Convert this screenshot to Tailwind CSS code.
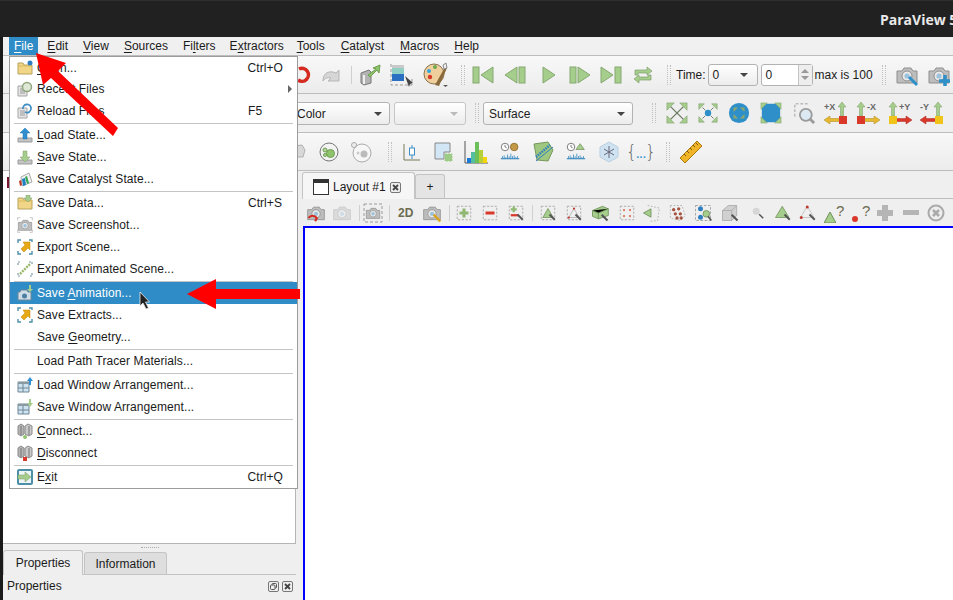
<!DOCTYPE html>
<html><head><meta charset="utf-8"><script src="https://cdn.jsdelivr.net/npm/@tailwindcss/browser@4"></script></head>
<body class="bg-[#efefef]">
<svg class="hidden" width="0" height="0">
<defs>
<symbol id="folder" viewBox="0 0 16 16"><path d="M1 3h5l1 2h8v9H1z" fill="#f2d687" stroke="#b9a25e"/><path d="M1 6h14" stroke="#d9b95c"/></symbol>
<symbol id="doc" viewBox="0 0 16 16"><path d="M1 5h9v10H1z" fill="#e4e4e4" stroke="#a5a5a5"/><path d="M3 8h5M3 10h5M3 12h5" stroke="#9a9a9a"/></symbol>
<symbol id="tray" viewBox="0 0 16 16"><path d="M1 11h14v4H1z" fill="#c4c4c4" stroke="#9b9b9b"/></symbol>
<symbol id="exportic" viewBox="0 0 16 16"><path d="M13 3v8l-2-2-4 4-3-3 4-4-2-3z" fill="#e8a917" stroke="#b8860b" stroke-width=".5"/><path d="M1 4V1h3M12 1h3v2M1 12v3h3M15 12v3h-3" fill="none" stroke="#4e8fa8" stroke-width="1.400"/></symbol>
<symbol id="window" viewBox="0 0 16 16"><path d="M1 5h11v10H1z" fill="#cfe2ef" stroke="#6d8696"/><path d="M1 5h11v2H1z" fill="#8a9aa3"/><path d="M6 7v8M1 11h11" stroke="#6d8696"/></symbol>
<symbol id="server" viewBox="0 0 16 16"><path d="M1 3l3-2 3 2v8l-3 2-3-2z" fill="#b5b5b5" stroke="#8a8a8a"/><path d="M8 3l3-2 4 2v8l-3 2-4-2z" fill="#c9c9c9" stroke="#8a8a8a"/><path d="M4 3v9M12 3v9" stroke="#777"/></symbol>
<symbol id="cam" viewBox="0 0 24 24"><path d="M2 8h5l2-3h7l2 3h4v12H2z" fill="#bdbdbd" stroke="#8f8f8f"/><circle cx="12" cy="13" r="5" fill="#e9e9e9" stroke="#8f8f8f"/><circle cx="12" cy="13" r="2.600" fill="#9dc3dc"/></symbol>
<symbol id="dash" viewBox="0 0 24 24"><rect x="3" y="3" width="18" height="18" fill="none" stroke="#9a9a9a" stroke-dasharray="3 2"/></symbol>
<symbol id="xarr" viewBox="0 0 24 24"><g stroke="#6d7a60" stroke-width="1.400"><path d="M5 5l14 14M19 5L5 19"/></g><g fill="#a5cd8b" stroke="#7c9a68" stroke-width=".6"><path d="M1 1h8L1 9zM23 1h-8l8 8zM1 23h8l-8-8zM23 23h-8l8-8z"/></g></symbol>
<symbol id="clockwave" viewBox="0 0 24 24"><circle cx="6" cy="6" r="4.500" fill="#fff" stroke="#666"/><path d="M6 3.500V6l2 1" stroke="#666" fill="none"/><path d="M1 20h22" stroke="#4a90c2" stroke-width="1.500"/><path d="M3 20v-3M5 20v-4M7 20v-2M9 20v-5M11 20v-3M13 20v-6M15 20v-3M17 20v-4M19 20v-2M21 20v-3" stroke="#3f8fc4"/></symbol>
<symbol id="pick" viewBox="0 0 24 24"><path d="M14 14l7 7" stroke="#555" stroke-width="2.500"/></symbol>
</defs>
</svg>
<div class="relative w-[953px] h-[600px] overflow-hidden font-['Liberation_Sans',Arial,sans-serif] text-[12px] text-[#1b1b1b] leading-[14px]">

<!-- title bar -->
<div class="h-[37px] bg-[#212121] border-t border-[#2e2e2e] pl-[880px] pt-[10px] font-['Open_Sans',sans-serif] font-bold text-[14px] leading-[18px] text-[#e9e9e9] whitespace-nowrap">ParaView 5.10.1</div>

<div class="flex h-[563px]">
<div class="w-[3px] bg-[#1a1a1a] shrink-0"></div>
<div class="flex-1 flex flex-col min-w-0">

<!-- menu bar -->
<div class="h-[18px] bg-[#f0f0f0] flex pl-[6px] gap-[5px] items-stretch shrink-0">
<span class="px-[5px] -mr-[1px] bg-[#308cc6] text-white flex items-center"><span><u class="underline-offset-2">F</u>ile</span></span>
<span class="px-[5px] flex items-center"><span><u class="underline-offset-2">E</u>dit</span></span>
<span class="px-[5px] flex items-center"><span><u class="underline-offset-2">V</u>iew</span></span>
<span class="px-[5px] flex items-center"><span><u class="underline-offset-2">S</u>ources</span></span>
<span class="px-[5px] -mr-[1px] flex items-center"><span>Fi<u class="underline-offset-2">l</u>ters</span></span>
<span class="px-[5px] -mr-[2px] flex items-center"><span>E<u class="underline-offset-2">x</u>tractors</span></span>
<span class="px-[5px] mr-[1px] flex items-center"><span><u class="underline-offset-2">T</u>ools</span></span>
<span class="px-[5px] mr-[1px] flex items-center"><span><u class="underline-offset-2">C</u>atalyst</span></span>
<span class="px-[5px] flex items-center"><span><u class="underline-offset-2">M</u>acros</span></span>
<span class="px-[5px] flex items-center"><span><u class="underline-offset-2">H</u>elp</span></span>
</div>

<!-- toolbar 1 -->
<div class="h-[39px] border-t border-b border-[#bdbdbd] bg-gradient-to-b from-[#f8f8f8] to-[#ececec] flex items-center pl-[288px] shrink-0 whitespace-nowrap">
<svg class="w-[24px] h-[24px] shrink-0" viewBox="0 0 24 24"><path d="M8 6A6.500 6.500 0 1 1 7 17" fill="none" stroke="#d42a1f" stroke-width="3.500"/></svg>
<svg class="w-[24px] h-[24px] ml-[4px] shrink-0" viewBox="0 0 24 24"><path d="M4 18c0-8 6-11 13-8l3-3v11h-11l3-3c-3-1-6 0-8 3z" fill="#d6d6d6" stroke="#b5b5b5"/></svg>
<span class="w-px h-[18px] bg-[#cfcfcf] ml-[8px]"></span>
<svg class="w-[22px] h-[22px] ml-[7px] shrink-0" viewBox="0 0 22 22"><path d="M2 9l8-3 2 2v11l-7 2-3-2z" fill="#b3b3b3" stroke="#777"/><path d="M5 11v9" stroke="#eee" stroke-width="2"/><path d="M9 11l8-6-3-1 7-3-1 8-2-3-7 7z" fill="#8fc46d" stroke="#6f9e50"/></svg>
<svg class="w-[24px] h-[24px] ml-[9px] shrink-0" viewBox="0 0 24 24"><rect x="2" y="2" width="12" height="4" fill="#c9c9c9"/><rect x="2" y="5" width="12" height="6" fill="#8fcfc4"/><rect x="2" y="11" width="12" height="7" fill="#2b6fc2"/><path d="M1 1v21h21v-7" fill="none" stroke="#999" stroke-dasharray="3 2"/><path d="M15 13l8 7-3 1-1 3z" fill="#444"/></svg>
<svg class="w-[26px] h-[26px] ml-[9px] shrink-0" viewBox="0 0 26 26"><ellipse cx="11" cy="12" rx="10" ry="10" fill="#efcf9c" stroke="#8a7350"/><circle cx="6" cy="9" r="2" fill="#35a5dd"/><circle cx="12" cy="5" r="2" fill="#6fa84f"/><circle cx="7" cy="15" r="2.200" fill="#d9382a"/><path d="M12 23l10-18 2 1-8 18z" fill="#8a6a3a"/><path d="M20 3l3-2 1 5-3 1z" fill="#eee" stroke="#888"/><path d="M20 23h5l-2.500 2z" fill="#555"/></svg>
<span class="w-[4px] h-[20px] border-x border-dotted border-[#c0c0c0] ml-[12px]"></span>
<svg class="w-[22px] h-[18px] ml-[7px] shrink-0" viewBox="0 0 22 18"><rect x="1" y="1" width="6" height="16" fill="#a5cd8b" stroke="#86a870"/><path d="M21 1v16L9 9z" fill="#a5cd8b" stroke="#86a870"/></svg>
<svg class="w-[22px] h-[18px] ml-[10px] shrink-0" viewBox="0 0 22 18"><rect x="15" y="1" width="6" height="16" fill="#a5cd8b" stroke="#86a870"/><path d="M13 1v16L1 9z" fill="#a5cd8b" stroke="#86a870"/></svg>
<svg class="w-[14px] h-[18px] ml-[16px] shrink-0" viewBox="0 0 14 18"><path d="M1 1v16l12-8z" fill="#a5cd8b" stroke="#86a870"/></svg>
<svg class="w-[22px] h-[18px] ml-[13px] shrink-0" viewBox="0 0 22 18"><rect x="1" y="1" width="6" height="16" fill="#a5cd8b" stroke="#86a870"/><path d="M9 1v16l12-8z" fill="#a5cd8b" stroke="#86a870"/></svg>
<svg class="w-[22px] h-[18px] ml-[9px] shrink-0" viewBox="0 0 22 18"><rect x="15" y="1" width="6" height="16" fill="#a5cd8b" stroke="#86a870"/><path d="M1 1v16l12-8z" fill="#a5cd8b" stroke="#86a870"/></svg>
<svg class="w-[20px] h-[20px] ml-[11px] shrink-0" viewBox="0 0 20 20"><path d="M2 10V5h12V2l5 4-5 4V8H5v2zM18 10v5H6v3l-5-4 5-4v2h9v-2z" fill="#a5cd8b" stroke="#7f9f6a" stroke-width=".7"/></svg>
<span class="w-[4px] h-[20px] border-x border-dotted border-[#c0c0c0] ml-[14px]"></span>
<span class="ml-[5px]">Time:</span>
<span class="ml-[2px] w-[50px] h-[22px] border border-[#b3b3b3] rounded-[3px] bg-gradient-to-b from-white to-[#ececec] flex items-center justify-between pl-[4px] pr-[9px] shrink-0"><span>0</span><span class="w-0 h-0 border-x-[4px] border-x-transparent border-t-[4px] border-t-[#444]"></span></span>
<span class="ml-[3px] w-[52px] h-[22px] border border-[#b3b3b3] rounded-[3px] bg-white flex items-stretch shrink-0"><span class="flex-1 pl-[4px] flex items-center">0</span><span class="w-[14px] border-l border-[#c4c4c4] bg-[#eee] flex flex-col items-center justify-center gap-[3px]"><span class="w-0 h-0 border-x-[4px] border-x-transparent border-b-[4px] border-b-[#999]"></span><span class="w-0 h-0 border-x-[4px] border-x-transparent border-t-[4px] border-t-[#999]"></span></span></span>
<span class="ml-[2px]">max is 100</span>
<span class="w-[4px] h-[20px] border-x border-dotted border-[#c0c0c0] ml-[9px]"></span>
<span class="relative w-[24px] h-[24px] ml-[9px] shrink-0"><svg class="w-[24px] h-[24px]" viewBox="0 0 24 24"><use href="#cam"/><path d="M14 14l8 8" stroke="#2f8fc9" stroke-width="3"/></svg></span>
<span class="relative w-[24px] h-[24px] ml-[8px] shrink-0"><svg class="w-[24px] h-[24px]" viewBox="0 0 24 24"><use href="#cam"/><path d="M18 12v11M12 18h11" stroke="#2f8fc9" stroke-width="3.500"/></svg></span>
</div>

<!-- toolbar 2 -->
<div class="h-[39px] border-b border-[#bdbdbd] bg-[#efefef] flex items-center pl-[200px] shrink-0 whitespace-nowrap">
<span class="mt-[1px] w-[187px] h-[23px] border border-[#b3b3b3] rounded-[3px] bg-gradient-to-b from-white to-[#ececec] flex items-center justify-between pl-[93px] pr-[7px] shrink-0"><span>Color</span><span class="w-0 h-0 border-x-[4px] border-x-transparent border-t-[4px] border-t-[#444]"></span></span>
<span class="mt-[1px] ml-[4px] w-[72px] h-[23px] border border-[#c6c6c6] rounded-[3px] bg-gradient-to-b from-white to-[#ececec] flex items-center justify-end pr-[7px] shrink-0"><span class="w-0 h-0 border-x-[4px] border-x-transparent border-t-[4px] border-t-[#bbb]"></span></span>
<span class="w-[4px] h-[20px] border-x border-dotted border-[#c0c0c0] ml-[9px]"></span>
<span class="mt-[1px] ml-[4px] w-[150px] h-[23px] border border-[#b3b3b3] rounded-[3px] bg-gradient-to-b from-white to-[#ececec] flex items-center justify-between pl-[5px] pr-[7px] shrink-0"><span>Surface</span><span class="w-0 h-0 border-x-[4px] border-x-transparent border-t-[4px] border-t-[#444]"></span></span>
<span class="w-[4px] h-[20px] border-x border-dotted border-[#c0c0c0] ml-[19px]"></span>
<svg class="w-[22px] h-[22px] ml-[10px] shrink-0" viewBox="0 0 24 24"><use href="#xarr"/></svg>
<svg class="w-[22px] h-[22px] ml-[9px] shrink-0" viewBox="0 0 24 24"><path d="M2 2h6L2 8zM22 2h-6l6 6zM2 22h6l-6-6zM22 22h-6l6-6z" fill="#a5cd8b" stroke="#7c9a68" stroke-width=".6"/><path d="M6 6l3 3M18 6l-3 3M6 18l3-3M18 18l-3-3" stroke="#6d7a60"/><circle cx="12" cy="12" r="3.500" fill="#2f8fc9"/></svg>
<svg class="w-[22px] h-[22px] ml-[9px] shrink-0" viewBox="0 0 24 24"><circle cx="12" cy="12" r="11" fill="#2f8fc9"/><path d="M6 6h5l-5 5zM18 6h-5l5 5zM6 18h5l-5-5zM18 18h-5l5-5z" fill="#8ba86f"/></svg>
<svg class="w-[22px] h-[22px] ml-[10px] shrink-0" viewBox="0 0 24 24"><path d="M5 2h14l3 3v14l-3 3H5l-3-3V5z" fill="#2f8fc9"/><path d="M1 1h7L1 8zM23 1h-7l7 7zM1 23h7l-7-7zM23 23h-7l7-7z" fill="#a5cd8b" stroke="#7c9a68" stroke-width=".5"/></svg>
<span class="relative w-[22px] h-[22px] ml-[11px] shrink-0"><svg class="w-[22px] h-[22px]" viewBox="0 0 24 24"><path d="M2 16V2h14" fill="none" stroke="#9a9a9a" stroke-dasharray="3 2"/><circle cx="14" cy="14" r="6.500" fill="#dce9f2" stroke="#9a9a9a" stroke-width="2"/><path d="M18 18l5 5" stroke="#9a9a9a" stroke-width="3"/></svg></span>
<svg class="w-[24px] h-[24px] ml-[9px] shrink-0 font-['Liberation_Sans',sans-serif]" viewBox="0 0 24 24"><text x="0" y="9" font-size="9" font-weight="700" fill="#666">+X</text><path d="M18 1l4 5h-2.500v9h-3V6H14z" fill="#a5cd8b" stroke="#7c9a68" stroke-width=".5"/><path d="M0 19l6-4v2.500h10v3H6V23z" fill="#e8b92f" stroke="#a88a20" stroke-width=".5"/><rect x="15" y="15" width="8" height="8" fill="#d9382a"/></svg>
<svg class="w-[24px] h-[24px] ml-[8px] shrink-0 font-['Liberation_Sans',sans-serif]" viewBox="0 0 24 24"><text x="11" y="9" font-size="9" font-weight="700" fill="#666">-X</text><path d="M5 1l4 5H6.500v9h-3V6H1z" fill="#a5cd8b" stroke="#7c9a68" stroke-width=".5"/><path d="M24 19l-6-4v2.500H8v3h10V23z" fill="#e8b92f" stroke="#a88a20" stroke-width=".5"/><rect x="1" y="15" width="8" height="8" fill="#d9382a"/></svg>
<svg class="w-[24px] h-[24px] ml-[8px] shrink-0 font-['Liberation_Sans',sans-serif]" viewBox="0 0 24 24"><text x="11" y="9" font-size="9" font-weight="700" fill="#666">+Y</text><path d="M5 1l4 5H6.500v9h-3V6H1z" fill="#a5cd8b" stroke="#7c9a68" stroke-width=".5"/><path d="M24 19l-6-4v2.500H8v3h10V23z" fill="#d9382a" stroke="#a82a20" stroke-width=".5"/><rect x="1" y="15" width="8" height="8" fill="#f0c419"/></svg>
<svg class="w-[24px] h-[24px] ml-[8px] shrink-0 font-['Liberation_Sans',sans-serif]" viewBox="0 0 24 24"><text x="0" y="9" font-size="9" font-weight="700" fill="#666">-Y</text><path d="M18 1l4 5h-2.500v9h-3V6H14z" fill="#a5cd8b" stroke="#7c9a68" stroke-width=".5"/><path d="M0 19l6-4v2.500h10v3H6V23z" fill="#d9382a" stroke="#a82a20" stroke-width=".5"/><rect x="15" y="15" width="8" height="8" fill="#f0c419"/></svg>
</div>

<!-- toolbar 3 -->
<div class="h-[38px] border-b border-[#bdbdbd] bg-gradient-to-b from-[#f8f8f8] to-[#ececec] flex items-center pl-[290px] shrink-0">
<svg class="w-[14px] h-[20px] shrink-0" viewBox="0 0 14 20"><path d="M1 4l8-1 3 5-2 7H1z" fill="#d8d8d8" stroke="#b0b0b0"/></svg>
<svg class="w-[20px] h-[20px] ml-[12px] shrink-0" viewBox="0 0 20 20"><circle cx="10" cy="10" r="9" fill="#f3f3f3" stroke="#777"/><circle cx="11.500" cy="11.500" r="4" fill="#8fc46d" stroke="#6f9e50"/><circle cx="6" cy="8" r="2" fill="#b6d7a2" stroke="#6f9e50"/><circle cx="6" cy="13" r="1.500" fill="#b6d7a2" stroke="#6f9e50"/></svg>
<svg class="w-[22px] h-[22px] ml-[11px] shrink-0" viewBox="0 0 22 22"><circle cx="12" cy="12" r="9" fill="#f6f6f6" stroke="#aaa"/><circle cx="14" cy="13" r="3.500" fill="#bbb"/><circle cx="8" cy="12" r="1.500" fill="#ccc"/><circle cx="4" cy="4" r="2.500" fill="#eee" stroke="#aaa"/></svg>
<span class="w-[4px] h-[20px] border-x border-dotted border-[#c0c0c0] ml-[16px]"></span>
<svg class="w-[18px] h-[18px] ml-[11px] shrink-0" viewBox="0 0 18 18"><path d="M1 1v16h16" fill="none" stroke="#7a7a5a"/><path d="M9 2v14" stroke="#3f8fc4"/><rect x="6.500" y="5" width="5" height="7" fill="#fff" stroke="#3f8fc4"/></svg>
<svg class="w-[20px] h-[20px] ml-[13px] shrink-0" viewBox="0 0 20 20"><path d="M1 1h15v9h-6v7H1z" fill="#d3e6f5" stroke="#888"/><rect x="11" y="12" width="7" height="7" fill="#9ccc85" stroke="#9ccc85" stroke-dasharray="2 1"/></svg>
<svg class="w-[24px] h-[24px] ml-[10px] shrink-0" viewBox="0 0 24 24"><path d="M1 1v22h23" fill="none" stroke="#555"/><rect x="3" y="18" width="4" height="5" fill="#1e78d8"/><rect x="7" y="12" width="4" height="11" fill="#55bda0"/><rect x="11" y="2" width="4" height="21" fill="#6cc05a"/><rect x="15" y="10" width="4" height="13" fill="#b7cf3a"/><rect x="19" y="17" width="4" height="6" fill="#f4d30f"/></svg>
<svg class="w-[20px] h-[20px] ml-[12px] shrink-0" viewBox="0 0 24 24"><use href="#clockwave"/><circle cx="17" cy="6" r="4.500" fill="#c49a4a" stroke="#8a6a2a"/></svg>
<svg class="w-[22px] h-[22px] ml-[12px] shrink-0" viewBox="0 0 22 22"><path d="M2 3l14-2 5 8-5 11-11-1z" fill="#9fc77f" stroke="#76985c"/><path d="M4 16L18 4" stroke="#2f7fc0" stroke-width="2.500" stroke-dasharray="1.500 1"/><path d="M4 20L21 6" stroke="#2f7fc0"/></svg>
<svg class="w-[20px] h-[20px] ml-[12px] shrink-0" viewBox="0 0 24 24"><use href="#clockwave"/><path d="M17 2l5 7h-10z" fill="#a5cd8b" stroke="#7c9a68"/></svg>
<svg class="w-[22px] h-[22px] ml-[12px] shrink-0" viewBox="0 0 22 22"><path d="M11 1l9 5v10l-9 5-9-5V6z" fill="#cfe2f2" stroke="#b9cfe0"/><path d="M11 5v12M6 8l10 6M16 8L6 14" stroke="#667"/></svg>
<span class="text-[#666] text-[17px] ml-[9px] w-[24px] flex items-center justify-center font-['DejaVu_Sans',sans-serif] font-light leading-[20px] shrink-0 whitespace-nowrap">{<span class="text-[#3f9bd0] font-bold text-[9px] -mx-[1px] pt-[6px]">...</span>}</span>
<span class="w-[4px] h-[20px] border-x border-dotted border-[#c0c0c0] ml-[13px]"></span>
<svg class="w-[24px] h-[24px] ml-[9px] shrink-0" viewBox="0 0 24 24"><path d="M1 18L18 1l5 5L6 23z" fill="#f0b429" stroke="#a87a10"/><path d="M5 14l2 2M8 11l2 2M11 8l2 2M14 5l2 2M17 3l2 2" stroke="#7a5a10"/></svg>
</div>

<!-- body -->
<div class="flex-1 flex min-h-0">
<!-- left dock -->
<div class="w-[299px] shrink-0 flex flex-col">
<div class="flex-1 w-[293px] bg-white border-r border-b border-[#b5b5b5] relative"><span class="absolute left-[4px] top-[6px] w-[2px] h-[11px] bg-[#7a1530]"></span></div>
<div class="h-[6px] flex items-center justify-center w-[293px]"><span class="w-[18px] border-t border-dotted border-[#aaa]"></span></div>
<div class="h-[25px] flex items-end border-b border-[#c4c4c4] w-[293px]">
<div class="relative -mb-px w-[80px] h-[25px] bg-[#efefef] border border-b-0 border-[#c4c4c4] rounded-t-[3px] flex items-center justify-center">Properties</div>
<div class="w-[83px] h-[22px] ml-px bg-[#dedede] border border-b-0 border-[#c4c4c4] rounded-t-[3px] flex items-center justify-center">Information</div>
</div>
<div class="h-[25px] w-[293px] flex items-center pl-[4px] pb-[3px] shrink-0">
<span class="flex-1">Properties</span>
<svg class="w-[11px] h-[11px] shrink-0" viewBox="0 0 11 11"><rect x=".5" y=".5" width="10" height="10" rx="1.500" fill="none" stroke="#777"/><rect x="4" y="2.500" width="4.500" height="4.500" rx="1" fill="none" stroke="#555"/><rect x="2.500" y="4" width="4.500" height="4.500" rx="1" fill="#efefef" stroke="#555"/></svg>
<svg class="w-[11px] h-[11px] ml-[3px] mr-[3px] shrink-0" viewBox="0 0 11 11"><rect x=".5" y=".5" width="10" height="10" rx="1.500" fill="none" stroke="#777"/><path d="M3 3l5 5M8 3L3 8" stroke="#444" stroke-width="1.800"/></svg>
</div>
</div>

<!-- right -->
<div class="flex-1 min-w-0 flex flex-col">
<div class="h-[28px] border-b border-[#bdbdbd] flex items-end shrink-0">
<div class="relative -mb-px w-[113px] h-[27px] bg-[#f6f6f6] border border-b-0 border-[#c4c4c4] rounded-t-[3px] flex items-center pl-[10px] pt-[2px] whitespace-nowrap shrink-0">
<svg class="w-[16px] h-[16px] shrink-0" viewBox="0 0 16 16"><rect x=".5" y=".5" width="15" height="15" fill="#fff" stroke="#333"/><rect x="0" y="0" width="16" height="4" fill="#333"/></svg>
<span class="ml-[4px]">Layout #1</span>
<svg class="w-[11px] h-[11px] ml-[4px] shrink-0" viewBox="0 0 11 11"><rect x=".5" y=".5" width="10" height="10" rx="1.500" fill="#eee" stroke="#777"/><path d="M3 3l5 5M8 3L3 8" stroke="#444" stroke-width="1.800"/></svg>
</div>
<div class="w-[30px] h-[24px] bg-[#e4e4e4] border border-b-0 border-[#c4c4c4] rounded-t-[3px] flex items-center justify-center">+</div>
</div>

<!-- view toolbar -->
<div class="h-[27px] bg-[#efefef] flex items-center pl-[4px] shrink-0 whitespace-nowrap">
<span class="w-[20px] h-[20px] shrink-0"><svg class="w-[20px] h-[20px]" viewBox="0 0 24 24"><use href="#cam"/><path d="M3 18a6 6 0 0 1 10 0l-2 4" fill="none" stroke="#d42a1f" stroke-width="2.500"/></svg></span>
<span class="w-[20px] h-[20px] ml-[6px] shrink-0 opacity-40"><svg class="w-[20px] h-[20px]" viewBox="0 0 24 24"><use href="#cam"/></svg></span>
<span class="w-px h-[16px] bg-[#d0d0d0] ml-[7px]"></span>
<svg class="w-[24px] h-[24px] ml-[1px] shrink-0" viewBox="0 0 24 24"><use href="#dash"/><g transform="translate(4 4) scale(.67)"><use href="#cam"/></g></svg>
<span class="w-px h-[16px] bg-[#d0d0d0] ml-[4px]"></span>
<span class="ml-[8px] font-bold text-[#6b6b4f] text-[12px]">2D</span>
<svg class="w-[20px] h-[20px] ml-[9px] shrink-0" viewBox="0 0 24 24"><use href="#cam"/><path d="M14 14l8 8" stroke="#d9a520" stroke-width="3"/></svg>
<span class="w-px h-[16px] bg-[#d0d0d0] ml-[7px]"></span>
<svg class="w-[18px] h-[18px] ml-[5px] shrink-0" viewBox="0 0 24 24"><use href="#dash"/><path d="M12 6v12M6 12h12" stroke="#8fb872" stroke-width="4"/></svg>
<svg class="w-[18px] h-[18px] ml-[8px] shrink-0" viewBox="0 0 24 24"><use href="#dash"/><path d="M6 12h12" stroke="#d9382a" stroke-width="4"/></svg>
<svg class="w-[18px] h-[18px] ml-[8px] shrink-0" viewBox="0 0 24 24"><use href="#dash"/><path d="M9 3v8M5 7h8" stroke="#8fb872" stroke-width="3"/><path d="M5 15h10" stroke="#d9382a" stroke-width="3"/><use href="#pick"/></svg>
<span class="w-px h-[16px] bg-[#d0d0d0] ml-[7px]"></span>
<svg class="w-[18px] h-[18px] ml-[6px] shrink-0" viewBox="0 0 24 24"><use href="#dash"/><path d="M12 6l7 12H5z" fill="#a5cd8b" stroke="#6f8f5a"/><use href="#pick"/></svg>
<svg class="w-[18px] h-[18px] ml-[8px] shrink-0" viewBox="0 0 24 24"><use href="#dash"/><path d="M12 6l7 12H5z" fill="none" stroke="#aaa"/><circle cx="12" cy="6" r="1.500" fill="#c0392b"/><circle cx="5" cy="18" r="1.500" fill="#c0392b"/><use href="#pick"/></svg>
<svg class="w-[20px] h-[20px] ml-[7px] shrink-0" viewBox="0 0 24 24"><path d="M3 9l12-5 7 3v8l-12 4-7-3z" fill="#a5cd8b" stroke="#6f8f5a"/><path d="M3 9l7 3 12-5M10 12v7" stroke="#6f8f5a"/><use href="#pick"/></svg>
<svg class="w-[18px] h-[18px] ml-[8px] shrink-0" viewBox="0 0 24 24"><use href="#dash"/><g fill="#d9735f"><circle cx="8" cy="8" r="1.500"/><circle cx="16" cy="8" r="1.500"/><circle cx="8" cy="16" r="1.500"/><circle cx="16" cy="16" r="1.500"/></g></svg>
<svg class="w-[20px] h-[20px] ml-[5px] shrink-0" viewBox="0 0 24 24"><path d="M8 3l14 3-2 15-10 1" fill="none" stroke="#aaa" stroke-dasharray="2 2"/><path d="M3 12l9-5v10z" fill="#a5cd8b" stroke="#6f8f5a"/></svg>
<svg class="w-[20px] h-[20px] ml-[6px] shrink-0" viewBox="0 0 24 24"><path d="M4 3h14l4 12-6 6-12-3z" fill="none" stroke="#aaa" stroke-dasharray="2 2"/><g fill="#a5523f"><circle cx="8" cy="8" r="2"/><circle cx="14" cy="7" r="2"/><circle cx="10" cy="13" r="2"/><circle cx="16" cy="13" r="2"/><circle cx="12" cy="18" r="2"/><circle cx="17" cy="18" r="2"/></g></svg>
<svg class="w-[20px] h-[20px] ml-[6px] shrink-0" viewBox="0 0 24 24"><use href="#dash"/><circle cx="9" cy="7" r="3" fill="#2f7fc0"/><circle cx="9" cy="17" r="3" fill="#2f7fc0"/><circle cx="16" cy="13" r="4" fill="#a5cd8b" stroke="#6f8f5a"/><path d="M18 16l4 5" stroke="#555" stroke-width="2"/></svg>
<svg class="w-[20px] h-[20px] ml-[7px] shrink-0" viewBox="0 0 24 24"><path d="M3 9l7-6h10v12l-6 6H3z" fill="#d0d0d0" stroke="#aaa"/><path d="M3 9h11v12M14 9l6-6" stroke="#aaa" fill="none"/><use href="#pick"/></svg>
<svg class="w-[14px] h-[14px] ml-[11px] shrink-0" viewBox="0 0 24 24"><circle cx="9" cy="9" r="6" fill="#d6d6d6"/><use href="#pick"/></svg>
<svg class="w-[18px] h-[18px] ml-[9px] shrink-0" viewBox="0 0 24 24"><path d="M11 3l9 15H2z" fill="#a5cd8b" stroke="#6f8f5a"/><use href="#pick"/></svg>
<svg class="w-[18px] h-[18px] ml-[7px] shrink-0" viewBox="0 0 24 24"><path d="M11 3l9 15H2z" fill="none" stroke="#bbb"/><circle cx="11" cy="4" r="2" fill="#c0392b"/><circle cx="3" cy="18" r="2" fill="#c0392b"/><use href="#pick"/></svg>
<span class="relative w-[20px] h-[20px] ml-[7px] shrink-0 text-[#6b6b4f] text-[15px] leading-[16px] text-right"><svg class="absolute left-0 bottom-0 w-[12px] h-[11px]" viewBox="0 0 12 11"><path d="M6 0l6 11H0z" fill="#a5cd8b" stroke="#6f8f5a"/></svg>?</span>
<span class="relative w-[20px] h-[20px] ml-[6px] shrink-0 text-[#6b6b4f] text-[15px] leading-[16px] text-right"><span class="absolute left-[2px] bottom-[1px] w-[6px] h-[6px] rounded-full bg-[#d9382a]"></span>?</span>
<span class="relative w-[16px] h-[16px] ml-[7px] shrink-0"><span class="absolute left-[5px] top-0 w-[6px] h-[16px] bg-[#b5b5b5]"></span><span class="absolute left-0 top-[5px] w-[16px] h-[6px] bg-[#b5b5b5]"></span></span>
<span class="w-[16px] h-[5px] ml-[10px] bg-[#b5b5b5] shrink-0"></span>
<svg class="w-[18px] h-[18px] ml-[8px] shrink-0" viewBox="0 0 18 18"><circle cx="9" cy="9" r="7.500" fill="#eee" stroke="#aaa" stroke-width="2"/><path d="M6 6l6 6M12 6l-6 6" stroke="#aaa" stroke-width="2.500"/></svg>
</div>

<div class="flex-1 w-[700px] ml-px bg-white border-2 border-b-0 border-[#0000ff]"></div>
</div>
</div>
</div>
</div>

<!-- popup menu -->
<div class="absolute left-[9px] top-[56px] w-[289px] h-[433px] bg-white border border-[#9c9c9c] z-10 flex flex-col tracking-[.07px] [&>div]:shrink-0">
<div class="h-[21px] flex items-center pl-[7px] pr-[14px]"><svg class="w-[16px] h-[16px] shrink-0" viewBox="0 0 16 16"><use href="#folder"/><circle cx="13" cy="3" r="2.500" fill="#2f7fc0"/></svg><span class="ml-[4px] flex-1"><u class="underline-offset-2">O</u>pen...</span><span>Ctrl+O</span></div>
<div class="h-[22px] flex items-center pl-[7px] pr-[5px]"><svg class="w-[16px] h-[16px] shrink-0" viewBox="0 0 16 16"><use href="#doc"/><circle cx="10" cy="6" r="4.500" fill="#dfe8d6" stroke="#8fa67c" stroke-width="1.500"/></svg><span class="ml-[4px] flex-1">Recen<u class="underline-offset-2">t</u> Files</span><span class="w-0 h-0 border-y-[4px] border-y-transparent border-l-[4px] border-l-[#666]"></span></div>
<div class="h-[22px] flex items-center pl-[7px] pr-[14px]"><svg class="w-[16px] h-[16px] shrink-0" viewBox="0 0 16 16"><use href="#doc"/><path d="M6 6a4 4 0 0 1 8-1M14 5a4 4 0 0 1-6 4" fill="none" stroke="#3f8fc4" stroke-width="1.800"/></svg><span class="ml-[4px] flex-1">Reload Files</span><span class="w-[35px]">F5</span></div>
<div class="h-[2px] flex items-center px-[4px]"><span class="w-full h-px bg-[#c4c4c4]"></span></div>
<div class="h-[22px] flex items-center pl-[7px] pr-[14px]"><svg class="w-[16px] h-[16px] shrink-0" viewBox="0 0 16 16"><use href="#tray"/><path d="M8 1l5 5h-3v6H6V6H3z" fill="#2f8fd0" stroke="#2577ad" stroke-width=".5"/></svg><span class="ml-[4px] flex-1"><u class="underline-offset-2">L</u>oad State...</span></div>
<div class="h-[22px] flex items-center pl-[7px] pr-[14px]"><svg class="w-[16px] h-[16px] shrink-0" viewBox="0 0 16 16"><use href="#tray"/><path d="M8 13l5-5h-3V2H6v6H3z" fill="#a5cd8b" stroke="#7c9a68" stroke-width=".5"/></svg><span class="ml-[4px] flex-1"><u class="underline-offset-2">S</u>ave State...</span></div>
<div class="h-[22px] flex items-center pl-[7px] pr-[14px]"><svg class="w-[16px] h-[16px] shrink-0" viewBox="0 0 16 16"><path d="M4 6l8-4 3 9-10 4z" fill="#f1f1f1" stroke="#aaa"/><path d="M5 8l3-1 1 7-3 1z" fill="#1f7fc0"/><path d="M8 6l2-1 2 7-2 1z" fill="#35a552"/><path d="M2 10l2-1 1 5-2 1z" fill="#c0392b"/></svg><span class="ml-[4px] flex-1">Save Catalyst State...</span></div>
<div class="h-[2px] flex items-center px-[4px]"><span class="w-full h-px bg-[#c4c4c4]"></span></div>
<div class="h-[22px] flex items-center pl-[7px] pr-[14px]"><svg class="w-[16px] h-[16px] shrink-0" viewBox="0 0 16 16"><use href="#folder"/><path d="M11 7l4-4h-2V0h-4v3H7z" fill="#a5cd8b" stroke="#7c9a68" stroke-width=".5"/></svg><span class="ml-[4px] flex-1">Save Data...</span><span class="mr-[1px]">Ctrl+S</span></div>
<div class="h-[22px] flex items-center pl-[7px] pr-[14px]"><svg class="w-[16px] h-[16px] shrink-0" viewBox="0 0 24 24"><use href="#cam"/><path d="M1 5V1h4M19 1h4v4M1 19v4h4M23 19v4h-4" fill="none" stroke="#aaa"/></svg><span class="ml-[4px] flex-1">Save Screenshot...</span></div>
<div class="h-[22px] flex items-center pl-[7px] pr-[14px]"><svg class="w-[16px] h-[16px] shrink-0" viewBox="0 0 16 16"><use href="#exportic"/></svg><span class="ml-[4px] flex-1">Export Scene...</span></div>
<div class="h-[22px] flex items-center pl-[7px] pr-[14px]"><svg class="w-[16px] h-[16px] shrink-0" viewBox="0 0 16 16"><path d="M3 13L13 3" stroke="#9cb86a" stroke-width="2.500" stroke-dasharray="2 1"/><path d="M1 4V1h3M12 1h3v3M1 12v3h3M15 12v3h-3" fill="none" stroke="#7a9aa5" stroke-width="1.200" stroke-dasharray="2 1"/></svg><span class="ml-[4px] flex-1">Export Animated Scene...</span></div>
<div class="h-[2px] flex items-center px-[4px]"><span class="w-full h-px bg-[#c4c4c4]"></span></div>
<div class="h-[22px] flex items-center pl-[7px] pr-[14px] bg-[#308cc6] text-white"><svg class="w-[16px] h-[16px] shrink-0" viewBox="0 0 16 16"><path d="M1 7h2l1-2h6l1 2h3v8H1z" fill="#cfdde8" stroke="#6d8696"/><circle cx="7.500" cy="11" r="2.500" fill="#4c7fa0"/><path d="M13 7l3-3h-2V0h-2v4h-2z" fill="#a5cd8b"/></svg><span class="ml-[4px] flex-1">Save <u class="underline-offset-2">A</u>nimation...</span></div>
<div class="h-[22px] flex items-center pl-[7px] pr-[14px]"><svg class="w-[16px] h-[16px] shrink-0" viewBox="0 0 16 16"><use href="#exportic"/></svg><span class="ml-[4px] flex-1">Save Extracts...</span></div>
<div class="h-[22px] flex items-center pl-[27px] pr-[14px]"><span class="flex-1">Save <u class="underline-offset-2">G</u>eometry...</span></div>
<div class="h-[2px] flex items-center px-[4px]"><span class="w-full h-px bg-[#c4c4c4]"></span></div>
<div class="h-[22px] flex items-center pl-[27px] pr-[14px]"><span class="flex-1">Load Path Tracer Materials...</span></div>
<div class="h-[2px] flex items-center px-[4px]"><span class="w-full h-px bg-[#c4c4c4]"></span></div>
<div class="h-[22px] flex items-center pl-[7px] pr-[14px]"><svg class="w-[16px] h-[16px] shrink-0" viewBox="0 0 16 16"><use href="#window"/><path d="M13 0l3 4h-2v4h-2V4h-2z" fill="#2f8fd0"/></svg><span class="ml-[4px] flex-1">Load Window Arrangement...</span></div>
<div class="h-[22px] flex items-center pl-[7px] pr-[14px]"><svg class="w-[16px] h-[16px] shrink-0" viewBox="0 0 16 16"><use href="#window"/><path d="M13 8l3-4h-2V0h-2v4h-2z" fill="#a5cd8b"/></svg><span class="ml-[4px] flex-1">Save Window Arrangement...</span></div>
<div class="h-[2px] flex items-center px-[4px]"><span class="w-full h-px bg-[#c4c4c4]"></span></div>
<div class="h-[22px] flex items-center pl-[7px] pr-[14px]"><svg class="w-[16px] h-[16px] shrink-0" viewBox="0 0 16 16"><use href="#server"/><circle cx="8" cy="14" r="2" fill="#8fc46d"/></svg><span class="ml-[4px] flex-1"><u class="underline-offset-2">C</u>onnect...</span></div>
<div class="h-[22px] flex items-center pl-[7px] pr-[14px]"><svg class="w-[16px] h-[16px] shrink-0" viewBox="0 0 16 16"><use href="#server"/><rect x="6" y="12" width="4" height="4" fill="#d9382a"/></svg><span class="ml-[4px] flex-1"><u class="underline-offset-2">D</u>isconnect</span></div>
<div class="h-[2px] flex items-center px-[4px]"><span class="w-full h-px bg-[#c4c4c4]"></span></div>
<div class="h-[22px] flex items-center pl-[7px] pr-[14px]"><svg class="w-[16px] h-[16px] shrink-0" viewBox="0 0 16 16"><rect x="1" y="1" width="14" height="14" rx="1" fill="#eef5f8" stroke="#4e8fa8" stroke-width="2"/><path d="M1 6h7V3l6 5-6 5v-3H1z" fill="#a5cd8b" stroke="#7c9a68" stroke-width=".5"/></svg><span class="ml-[4px] flex-1">E<u class="underline-offset-2">x</u>it</span><span>Ctrl+Q</span></div>
</div>

<!-- red annotation arrows and cursor -->
<svg class="absolute left-0 top-0 z-20 pointer-events-none" width="320" height="320" viewBox="0 0 320 320">
<path d="M36 53L66 63 58 71 118 128 113 136 51 78 43 85z" fill="#ff0000"/>
<path d="M187 294L216 279V289H300V299H216V309z" fill="#ff0000"/>
<path d="M140 292v14l3-3 3 6 2.500-1-3-6h4z" fill="#222" stroke="#eee" stroke-width=".8"/>
</svg>
</div>
</body></html>
